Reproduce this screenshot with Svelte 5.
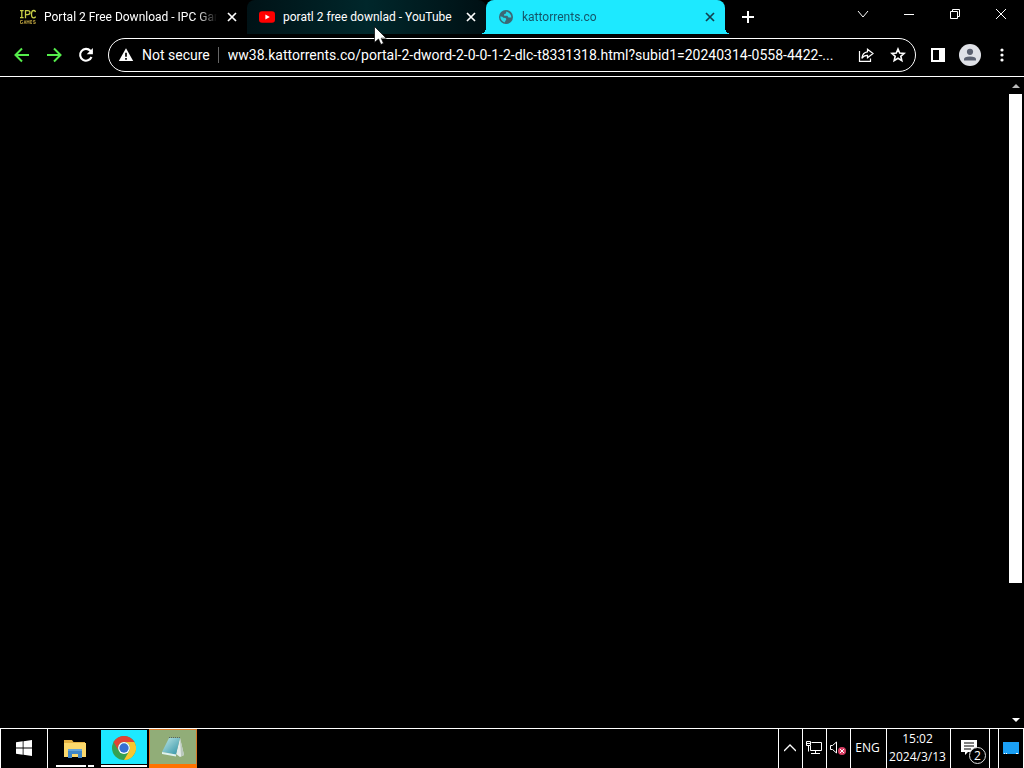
<script>
  const tabs = [
    { title: 'Portal 2 Free Download - IPC Games', icon: 'ipc' },
    { title: 'poratl 2 free downlad - YouTube', icon: 'youtube' },
    { title: 'kattorrents.co', icon: 'globe' }
  ];
  let active = $state(2);
  let url = $state('ww38.kattorrents.co/portal-2-dword-2-0-0-1-2-dlc-t8331318.html?subid1=20240314-0558-4422-...');
</script>

<div class="screen">
  <header>
    <div class="strip">
      <div class="tabs">
        {#each tabs as tab, i}
          <div class="tab" class:active={active === i} class:hovered={i === 1}>
            <button class="select" onclick={() => (active = i)}>
              {#if tab.icon === 'ipc'}
                <svg class="fav" width="16" height="16" viewBox="0 0 16 16" fill="none" stroke="#c8cf45" stroke-width="1.3">
                  <path d="M0 1.6h3.6M1.8 1.6v7M0 8.6h3.6M5.5 9.3V1.6h2.2q2.3 0 2.3 2t-2.3 2H5.5M15.6 2.9Q15 1.5 13.7 1.5q-2.2 0-2.2 3.7t2.2 3.7q1.3 0 1.9-1.4" />
                  <path stroke="#9a8434" stroke-width="1" d="M2.7 11.5H.5v3h2v-1.4M4 14.8l1-3.3 1 3.3M4.3 13.8h1.4M7 14.8v-3.3l1 1.7 1-1.7v3.3M12 11.5h-1.8v3H12M10.2 13H12M15.3 11.5h-2V13h2v1.5h-2" />
                </svg>
              {:else if tab.icon === 'youtube'}
                <svg class="fav" width="16" height="16" viewBox="0 0 16 16"><rect y="2.2" width="16" height="11.6" rx="3" fill="#f00" /><path d="M6.4 5.4v5.2L10.8 8z" fill="#fff" /></svg>
              {:else}
                <svg class="fav" width="16" height="16" viewBox="0 0 16 16"><circle cx="8" cy="8" r="7" fill="#3c6875" /><path d="M2.2 7.5q2-.3 3.2 1.2l2 .4q1.3.7.5 2L6.6 13.5Q2.7 12 2.2 7.5M8.4 2.6l-.5 1.8-1.8.8v1.6h3.2l1.2 1.6h2.8Q13.4 4.6 8.4 2.6" fill="#25d9e9" /></svg>
              {/if}
              <span>{tab.title}</span>
            </button>
            <button class="close" aria-label="Close tab">
              <svg width="16" height="16" viewBox="0 0 16 16" stroke="currentColor" stroke-width="1.7"><path d="M4 4l8 8M12 4l-8 8" /></svg>
            </button>
          </div>
        {/each}
      </div>
      <button class="new" aria-label="New tab"><svg width="16" height="16" viewBox="0 0 16 16" stroke="#fff" stroke-width="2"><path d="M8 2v12M2 8h12" /></svg></button>
      <div class="controls">
        <button aria-label="Search tabs"><svg width="12" height="12" viewBox="0 0 12 12"><path d="M1 3l5 6 5-6" /></svg></button>
        <button aria-label="Minimize"><svg width="12" height="12" viewBox="0 0 12 12"><path d="M1 6.5h10" /></svg></button>
        <button aria-label="Restore"><svg width="12" height="12" viewBox="0 0 12 12"><path d="M1.5 3.5h7v7h-7zM3.5 3.5v-2h7v7h-2" /></svg></button>
        <button aria-label="Close window"><svg width="12" height="12" viewBox="0 0 12 12"><path d="M1 1l10 10M11 1L1 11" /></svg></button>
      </div>
    </div>
    <nav class="toolbar">
      <button aria-label="Back"><svg width="16" height="16" viewBox="0 0 16 16" fill="none" stroke="#55ed4b" stroke-width="2"><path d="M15 8H2M8 1.5L1.5 8 8 14.5" /></svg></button>
      <button aria-label="Forward"><svg width="16" height="16" viewBox="0 0 16 16" fill="none" stroke="#55ed4b" stroke-width="2"><path d="M1 8h13M8 1.5L14.5 8 8 14.5" /></svg></button>
      <button aria-label="Reload"><svg width="16" height="16" viewBox="0 0 16 16" fill="none" stroke="#fff" stroke-width="2.1"><path d="M13.5 10A5.9 5.9 0 1 1 12.4 3.8L14 5.5" /><path d="M14.9 1v6.3H8.7z" fill="#fff" stroke="none" /></svg></button>
      <div class="omnibox">
        <button class="security">
          <svg width="16" height="16" viewBox="0 0 16 16"><path d="M8 1.3L15.2 14H.8z" fill="#fff" /><path d="M8 5.8v4M8 11v1.8" stroke="#000" stroke-width="1.7" /></svg>
          <span>Not secure</span>
        </button>
        <input aria-label="Address" spellcheck="false" bind:value={url} />
        <button aria-label="Share"><svg width="16" height="16" viewBox="0 0 16 16" fill="none" stroke="#fff" stroke-width="1.2"><path d="M1.5 4v10.4h11v-3M9.5 2.2L15 6.5l-5.5 4.3V8.4Q6 8.2 3.8 11.3 4.5 5.3 9.5 4.8z" /></svg></button>
        <button aria-label="Bookmark this tab"><svg width="16" height="16" viewBox="0 0 16 16" fill="none" stroke="#fff" stroke-width="1.6"><path d="M8 2l1.7 4 4.4.4-3.3 2.9 1 4.3L8 11.3l-3.8 2.3 1-4.3-3.3-2.9L6.3 6z" /></svg></button>
      </div>
      <button aria-label="Side panel"><svg width="16" height="16" viewBox="0 0 16 16"><path fill="#fff" fill-rule="evenodd" d="M1 1h14v14H1zM3 3v10h6V3z" /></svg></button>
      <button aria-label="Profile"><svg width="22" height="22" viewBox="0 0 22 22"><circle cx="11" cy="11" r="11" fill="#dfe1e7" /><circle cx="11" cy="7.8" r="3.1" fill="#5a6070" /><path d="M5 16.5v-1.2Q5 12.5 11 12.5t6 2.8v1.2z" fill="#5a6070" /></svg></button>
      <button aria-label="Menu"><svg width="16" height="16" viewBox="0 0 16 16" fill="#fff"><circle cx="8" cy="3" r="1.6" /><circle cx="8" cy="8" r="1.6" /><circle cx="8" cy="13" r="1.6" /></svg></button>
    </nav>
  </header>

  <main>
    <div class="scrollbar">
      <button aria-label="Scroll up"><svg width="8" height="4" viewBox="0 0 8 4" fill="#bbb"><path d="M0 4l4-4 4 4z" /></svg></button>
      <div class="track"><div class="thumb"></div></div>
      <button aria-label="Scroll down"><svg width="8" height="4" viewBox="0 0 8 4" fill="#fff"><path d="M0 0h8L4 4z" /></svg></button>
    </div>
  </main>

  <footer>
    <button class="start" aria-label="Start"><svg width="16" height="16" viewBox="0 0 16 16" fill="#fff"><path d="M0 2.3l6.7-1v6.2H0zM7.5 1.2L16 0v7.5H7.5zM0 8.4h6.7v6.3L0 13.7zM7.5 8.4H16V16l-8.5-1.2z" /></svg></button>
    <button class="app explorer" aria-label="File Explorer">
      <svg width="24" height="24" viewBox="0 0 24 24"><path d="M1 3h8l1.5 2H22v15H1z" fill="#e5b344" /><path d="M1 6h22v14H1z" fill="#fbd96c" /><path d="M5 21v-8h14v8h-4v-4H9v4z" fill="#3f86c6" /><path d="M5 12h14v2H5z" fill="#65a6d8" /></svg>
    </button>
    <button class="app chrome" aria-label="Google Chrome">
      <svg width="24" height="24" viewBox="0 0 24 24"><circle cx="12" cy="12" r="12" fill="#36a052" /><path d="M1.6 6A12 12 0 0 1 22.4 6H12a6 6 0 0 0-5.2 9z" fill="#e04436" /><path d="M22.4 6A12 12 0 0 1 12 24l5.2-9A6 6 0 0 0 12 6z" fill="#fac72e" /><circle cx="12" cy="12" r="5.9" fill="#fff" /><circle cx="12" cy="12" r="4.7" fill="#3570d4" /></svg>
    </button>
    <button class="app notepad" aria-label="Notepad">
      <svg width="24" height="24" viewBox="0 0 24 24"><defs><linearGradient id="page" x1="0" y1="0" x2="1" y2="1"><stop offset="0" stop-color="#c0e9e8" /><stop offset="1" stop-color="#2f91a5" /></linearGradient></defs><path d="M19 3l4 17-4 2-4-3z" fill="#e5ece9" /><path d="M19 3l1 18.5 3-1.5z" fill="#bac8bd" /><path d="M8 3h11l-4 16.5L1 17z" fill="url(#page)" /><path d="M1 17l14 2.5v2L1 19z" fill="#dff2f0" /><path d="M8 2.5h11" stroke="#566" stroke-width="1.2" stroke-dasharray="1 1" /></svg>
    </button>
    <div class="tray">
      <button class="cell" aria-label="Show hidden icons"><svg width="12" height="12" viewBox="0 0 12 12" fill="none" stroke="#fff" stroke-width="1.3"><path d="M0 9l6-6 6 6" /></svg></button>
      <button class="cell" aria-label="Network"><svg width="16" height="16" viewBox="0 0 16 16" fill="none" stroke="#fff"><path d="M5.5 2.5h10v8h-11V6M9.5 10.5v3M5 13.5h9M.5 1.5h4v4h-4zM2.5 5.5v6M.5 3.5h4" /></svg></button>
      <button class="cell" aria-label="Volume muted"><svg width="16" height="16" viewBox="0 0 16 16" fill="none" stroke="#fff"><path d="M.5 5.5h2L6.5 2v11l-4-3.5h-2z" /><circle cx="12" cy="11" r="4" fill="#d83e64" stroke="none" /><path d="M10 9l4 4M14 9l-4 4" /></svg></button>
      <button class="cell lang">ENG</button>
      <button class="cell clock"><span>15:02</span><span>2024/3/13</span></button>
      <button class="cell notes" aria-label="2 notifications">
        <svg width="17" height="17" viewBox="0 0 17 17"><path d="M0 1h16v12H7l-3 3v-3H0z" fill="#fff" /><path d="M3 4h10M3 7h10M3 10h7" stroke="#000" /></svg>
        <span class="badge">2</span>
      </button>
      <button class="cell desktop" aria-label="Show desktop"><svg width="16" height="12" viewBox="0 0 16 12"><path d="M0 0h16v12H0z" fill="#1ba0f5" /><path d="M1 11.5h1M3 11.5h1M13 11.5h2" stroke="#fff" /></svg></button>
    </div>
  </footer>
  <svg class="pointer" width="13" height="20" viewBox="0 0 13 20"><path d="M.5.5v16l4-3.5 2.4 5.5 2.6-1.2-2.3-5.1h5z" fill="#fff" stroke="#000" stroke-width=".7" /></svg>
</div>

<style>
  :global(body) { margin: 0; background: #000; }
  .screen { position: relative; min-height: 100vh; display: flex; flex-direction: column; background: #000; color: #fff; font: 12px/16px "Open Sans", "Noto Sans", sans-serif; overflow: hidden; }
  * { box-sizing: border-box; }
  button { border: 0; padding: 0; background: none; color: inherit; font: inherit; display: flex; align-items: center; justify-content: center; }
  svg { display: block; flex: none; }
  header { border-bottom: 1px solid #fff; font-family: Roboto, "Open Sans", sans-serif; }
  .strip { display: flex; height: 34px; padding-left: 8px; }
  .tabs { display: flex; flex: 0 1 717px; min-width: 0; }
  .tab { position: relative; display: flex; flex: 1 1 0; min-width: 0; align-items: center; padding: 0 7px 0 12px; border-radius: 8px 8px 0 0; }
  .hovered { background: linear-gradient(90deg, #001216, #00272b 50%, #001014); }
  .active { background: #1de9ff; color: #14566a; }
  .active::before, .active::after { content: ""; position: absolute; bottom: 0; width: 6px; height: 6px; }
  .active::before { right: 100%; background: radial-gradient(circle at 0 0, transparent 6px, #1de9ff 6px); }
  .active::after { left: 100%; background: radial-gradient(circle at 100% 0, transparent 6px, #1de9ff 6px); }
  .select { flex: 1; min-width: 0; height: 100%; gap: 8px; justify-content: flex-start; }
  .select span { flex: 1; text-align: left; white-space: nowrap; overflow: hidden; mask-image: linear-gradient(90deg, #000 calc(100% - 20px), transparent); }
  .hovered .select span { mask-image: none; }
  .close { width: 16px; height: 16px; margin-left: 7px; }
  .active .close { color: #123f4e; }
  .new { width: 28px; margin-left: 9px; }
  .controls { display: flex; height: 28px; margin-left: auto; }
  .controls button { width: 46px; }
  .controls svg { fill: none; stroke: #fff; }
  .toolbar { display: flex; align-items: center; height: 42px; padding: 0 6px; }
  .toolbar > button { width: 32px; height: 32px; }
  .omnibox { flex: 1; min-width: 0; height: 34px; margin: 0 6px; border: 1px solid #fff; border-radius: 17px; display: flex; align-items: center; padding: 0 1px 0 9px; font-size: 14px; }
  .security { gap: 8px; padding-right: 8px; border-right: 1px solid #666; white-space: nowrap; }
  .omnibox input { flex: 1; min-width: 0; border: 0; outline: 0; padding: 0 0 0 9px; background: none; color: #fff; font: inherit; text-overflow: ellipsis; }
  .omnibox > button:not(.security) { width: 32px; height: 32px; }
  main { flex: 1; display: flex; justify-content: flex-end; }
  .scrollbar { width: 17px; display: flex; flex-direction: column; }
  .scrollbar button { height: 17px; }
  .track { flex: 1; display: flex; flex-direction: column; padding: 0 2px; }
  .track::after { content: ""; flex: 128; }
  .thumb { flex: 489; background: #fff; }
  footer { display: flex; height: 40px; border: 1px solid #fff; border-bottom: 0; }
  .start { width: 47px; border-right: 1px solid #fff; padding-bottom: 2px; }
  .app { position: relative; width: 48px; }
  .explorer { width: 53px; }
  .explorer::after { content: ""; position: absolute; left: 8px; right: 7px; bottom: 1px; height: 2px; background: linear-gradient(90deg, #fff 30px, #000 30px, #000 32px, #fff 32px); }
  .chrome { width: 46px; margin: 1px 0; background: #1de9ff; border-bottom: 2px solid #fff; box-shadow: inset 0 -1px #000; }
  .notepad { margin-left: 2px; background: #91ad78; border: 1px solid #d87a28; border-bottom: 4px solid #ff7200; }
  .tray { display: flex; margin-left: auto; }
  .cell { width: 24px; border-left: 1px solid #fff; padding: 0 2px 2px 0; }
  .lang { width: 36px; }
  .clock { width: 64px; flex-direction: column; line-height: 18px; }
  .notes { position: relative; width: 40px; border-right: 1px solid #fff; }
  .badge { position: absolute; left: 18px; bottom: 4px; width: 17px; height: 17px; border: 1px solid #ddd; border-radius: 50%; background: #000; line-height: 15px; }
  .desktop { width: 25px; margin-left: 8px; padding-right: 0; }
  .pointer { position: absolute; left: 374px; top: 26px; }
</style>
